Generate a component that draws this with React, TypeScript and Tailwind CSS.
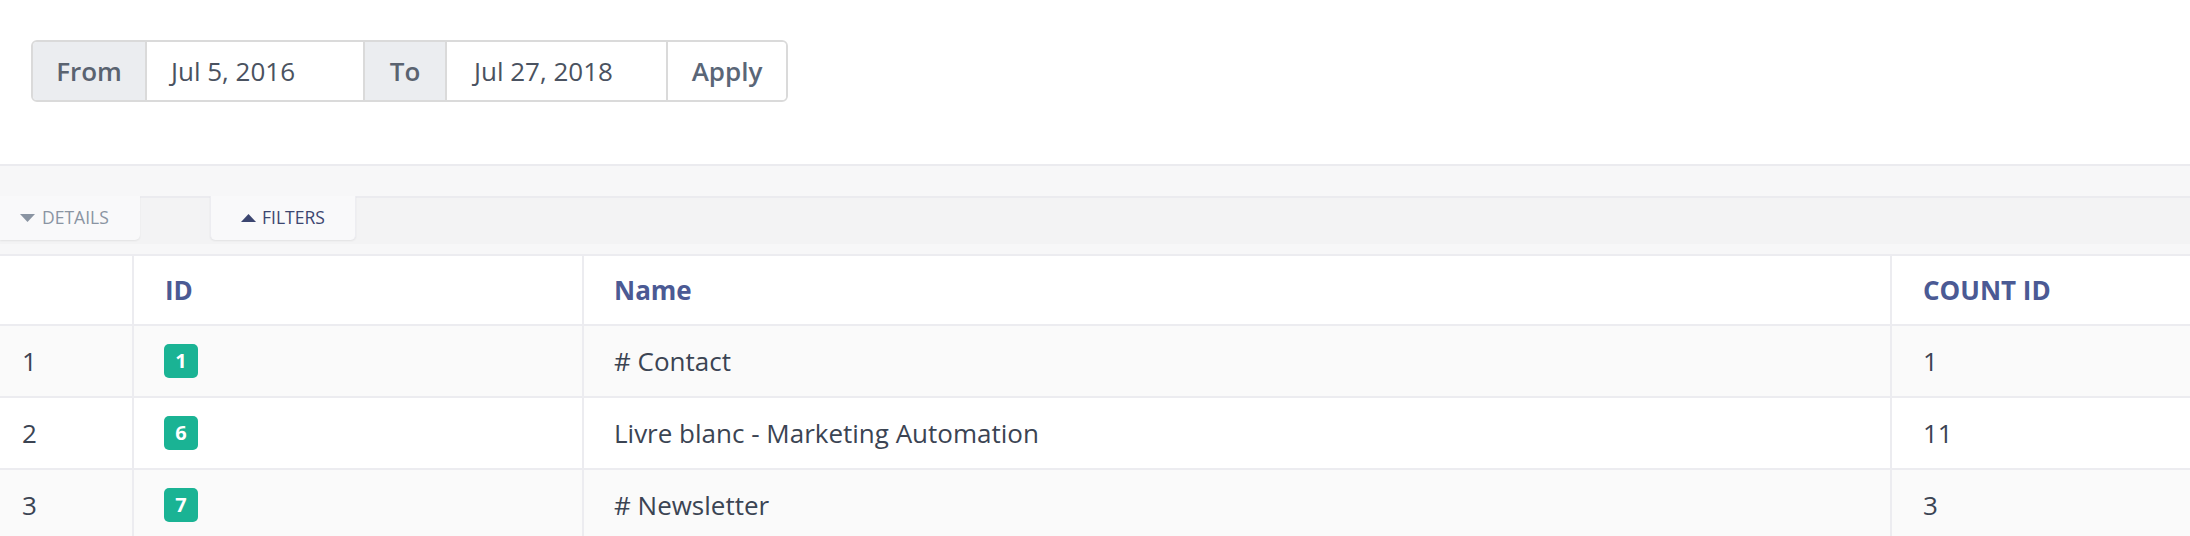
import React from "react";

const rows = [
  { n: "1", id: "1", name: "# Contact", count: "1", bg: "bg-[#fafafa]" },
  { n: "2", id: "6", name: "Livre blanc - Marketing Automation", count: "11", bg: "bg-white" },
  { n: "3", id: "7", name: "# Newsletter", count: "3", bg: "bg-[#fafafa]" },
];

function TriDown({ color }: { color: string }) {
  return (
    <svg width="15" height="8" viewBox="0 0 15 8" className="shrink-0">
      <polygon points="0,0 15,0 7.5,8" fill={color} />
    </svg>
  );
}

function TriUp({ color }: { color: string }) {
  return (
    <svg width="15" height="8" viewBox="0 0 15 8" className="shrink-0">
      <polygon points="0,8 15,8 7.5,0" fill={color} />
    </svg>
  );
}

export default function App() {
  return (
    <div className="w-[2190px] h-[536px] overflow-hidden bg-white font-['Open_Sans',sans-serif]">
      {/* Date range */}
      <div className="h-[164px] pt-[40px] pl-[31px]">
        <div className="inline-flex h-[62px] border-2 border-[#dadada] rounded-[6px] overflow-hidden text-[26px] leading-none">
          <div className="w-[114px] border-r-2 border-[#dadada] bg-[#ebedf0] flex items-center justify-center font-semibold text-[#5a6370]">
            From
          </div>
          <div className="w-[218px] border-r-2 border-[#dadada] bg-white flex items-center pl-[24px] text-[#4a5260]">
            Jul 5, 2016
          </div>
          <div className="w-[82px] border-r-2 border-[#dadada] bg-[#ebedf0] flex items-center justify-center font-semibold text-[#5a6370]">
            To
          </div>
          <div className="w-[221px] border-r-2 border-[#dadada] bg-white flex items-center pl-[27px] text-[#4a5260]">
            Jul 27, 2018
          </div>
          <div className="w-[118px] bg-white flex items-center justify-center font-semibold text-[#5a6677]">
            Apply
          </div>
        </div>
      </div>

      {/* Tabs area */}
      <div className="border-t-2 border-[#ebebef] bg-[#f7f7f8] pt-[30px] pb-[10px]">
        <div className="h-[48px] border-t-2 border-[#ebebef] bg-[#f3f3f4] flex items-start text-[17.5px] leading-none">
          <div className="-mt-[2px] h-[44px] w-[140px] bg-[#f9f9fa] rounded-br-[5px] shadow-[0_1px_2px_rgba(0,0,0,0.07)] flex items-center pl-[20px] gap-[7px] text-[#8a94a2]">
            <TriDown color="#8a94a2" />
            <span>DETAILS</span>
          </div>
          <div className="-mt-[2px] ml-[70px] h-[44px] w-[146px] bg-[#f9f9fa] rounded-b-[5px] shadow-[0_1px_2px_rgba(0,0,0,0.07)] border-x border-[#ededf1] flex items-center pl-[30px] gap-[6px] text-[#3c4670]">
            <TriUp color="#3c4670" />
            <span>FILTERS</span>
          </div>
        </div>
      </div>

      {/* Table */}
      <div className="border-t-2 border-[#ececf0] text-[26px] leading-none">
        <div className="grid grid-cols-[132px_450px_1308px_300px] h-[70px] border-b-2 border-[#ececf0] bg-white font-bold text-[#4b5a94]">
          <div className="flex items-center pl-[22px]"></div>
          <div className="flex items-center pl-[31px] border-l-2 border-[#ececf0]">ID</div>
          <div className="flex items-center pl-[30px] border-l-2 border-[#ececf0]">Name</div>
          <div className="flex items-center pl-[31px] border-l-2 border-[#ececf0]">COUNT ID</div>
        </div>
        {rows.map((r) => (
          <div
            key={r.n}
            className={`grid grid-cols-[132px_450px_1308px_300px] h-[72px] border-b-2 border-[#ececf0] text-[#3b4453] ${r.bg}`}
          >
            <div className="flex items-center pl-[22px]">{r.n}</div>
            <div className="flex items-center pl-[30px] border-l-2 border-[#ececf0]">
              <span className="w-[34px] h-[34px] rounded-[5px] bg-[#1ab394] text-white font-bold text-[20px] flex items-center justify-center">
                {r.id}
              </span>
            </div>
            <div className="flex items-center pl-[30px] border-l-2 border-[#ececf0]">{r.name}</div>
            <div className="flex items-center pl-[31px] border-l-2 border-[#ececf0]">{r.count}</div>
          </div>
        ))}
      </div>
    </div>
  );
}
